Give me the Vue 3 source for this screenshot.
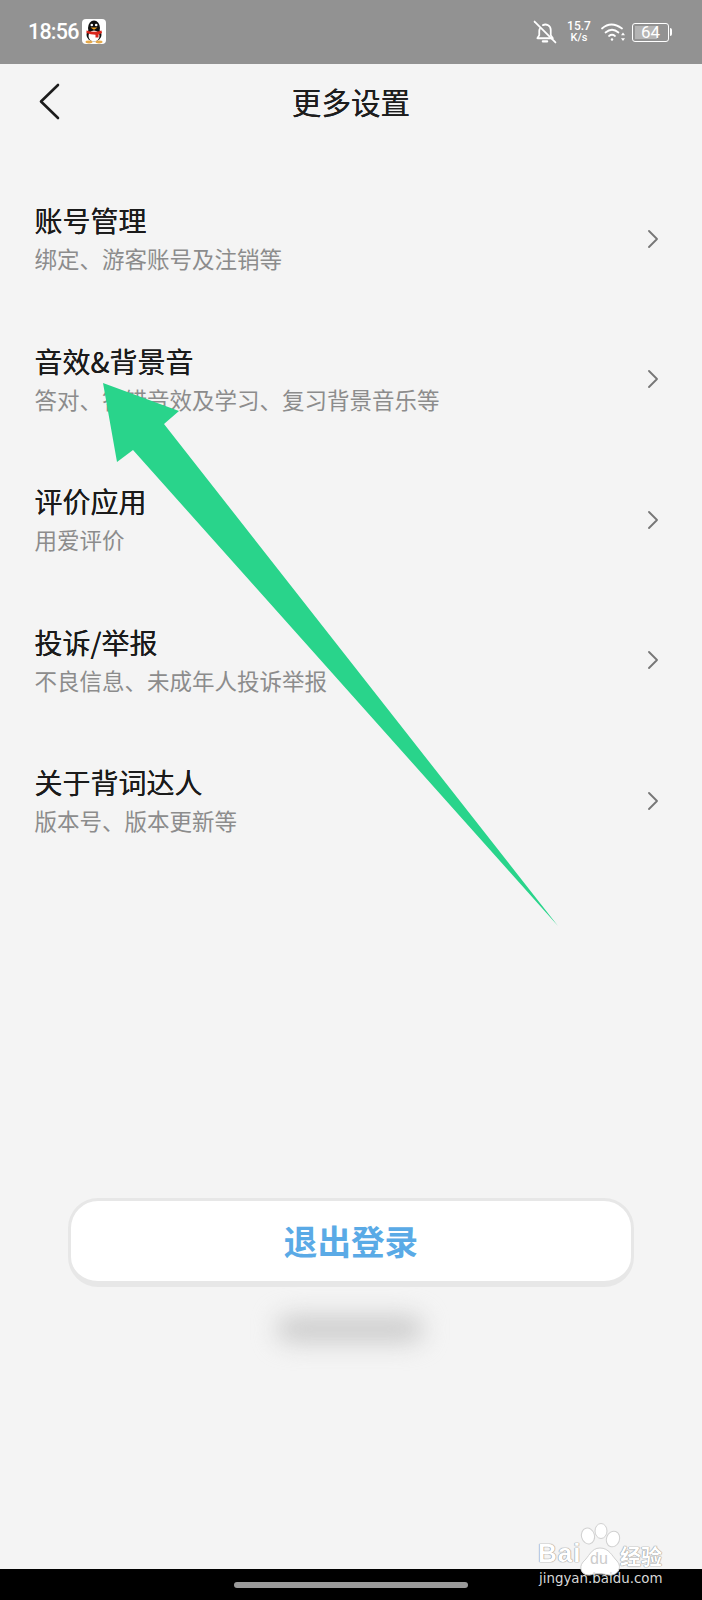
<script setup>
const rows = [
  { title: '账号管理', sub: '绑定、游客账号及注销等' },
  { title: '音效&背景音', sub: '答对、答错音效及学习、复习背景音乐等' },
  { title: '评价应用', sub: '用爱评价' },
  { title: '投诉/举报', sub: '不良信息、未成年人投诉举报' },
  { title: '关于背词达人', sub: '版本号、版本更新等' },
]
</script>

<template>
  <div class="page">
    <header class="status">
      <div class="status-left">
        <span class="time">18:56</span>
        <svg class="qq" width="24" height="25" viewBox="0 0 24 25">
          <rect width="24" height="25" rx="4" fill="#fff" />
          <ellipse cx="12" cy="9" rx="6" ry="7.500" fill="#111" />
          <ellipse cx="12" cy="16" rx="7.500" ry="6.500" fill="#111" />
          <ellipse cx="12" cy="17" rx="5.500" ry="5.500" fill="#fff" />
          <circle cx="9.800" cy="6" r="1.300" fill="#fff" />
          <circle cx="14.200" cy="6" r="1.300" fill="#fff" />
          <path d="M8.500 8.500h7l-3.500 2.200z" fill="#f0a020" />
          <path d="M4.500 11.500q7.500 2.500 15 0l.5 2.500q-1.500 1-3.500 1.400v3h-3v-2.600q-5 0-9-1.800z" fill="#d9261c" />
          <ellipse cx="7" cy="23" rx="3.500" ry="1.400" fill="#e6a94a" />
          <ellipse cx="17" cy="23" rx="3.500" ry="1.400" fill="#e6a94a" />
        </svg>
      </div>
      <div class="status-right">
        <svg width="24" height="24" viewBox="0 0 23 23" fill="none" stroke="#fff" stroke-width="1.700" stroke-linecap="round" stroke-linejoin="round">
          <path d="M5 17.500h14l-2-3V9.500a5.200 5.200 0 0 0-7.500-4.600" />
          <path d="M6.600 8.400q-.6 1-.6 2.100v4l-1.800 3" />
          <path d="M9.500 20.500h4" stroke-width="2.200" />
          <path d="M1.500 1.500l20 20" />
        </svg>
        <div class="speed"><span>15.7</span><span class="unit">K/s</span></div>
        <svg class="wifi" width="25" height="20" viewBox="0 0 25 20" fill="none" stroke="#fff" stroke-width="1.700" stroke-linecap="round">
          <path d="M1 6.500q9-8 20 0" />
          <path d="M4.500 10.500q6.500-5.500 13 0" />
          <path d="M8 14q3-2.500 6 0" />
          <circle cx="11" cy="17.500" r="1.200" fill="#fff" stroke="none" />
          <path d="M22 10.500l-2 2.800h4zM22 19l-2-2.800h4z" fill="#fff" stroke="none" />
        </svg>
        <div class="battery">
          <div class="battery-body">
            <span class="battery-fill"></span>
            <span class="battery-num">64</span>
          </div>
          <span class="battery-cap"></span>
        </div>
      </div>
    </header>

    <main class="main">
      <nav class="nav">
        <svg class="back" width="22" height="37" viewBox="0 0 22 37" fill="none" stroke="#1c1c1c" stroke-width="2.600" stroke-linecap="round" stroke-linejoin="round">
          <path d="M19 2L2 18.500 19 35" />
        </svg>
        <h1 class="nav-title">更多设置</h1>
      </nav>

      <ul class="list">
        <li v-for="row in rows" :key="row.title" class="row">
          <div class="row-text">
            <div class="row-title">{{ row.title }}</div>
            <div class="row-sub">{{ row.sub }}</div>
          </div>
          <svg class="chev" width="10" height="18" viewBox="0 0 10 18" fill="none" stroke="#767676" stroke-width="1.800" stroke-linecap="round" stroke-linejoin="round">
            <path d="M1 1l8 8-8 8" />
          </svg>
        </li>
      </ul>

      <button class="logout" type="button">退出登录</button>
      <div class="blurred"></div>
    </main>

    <footer class="navbar"><span class="pill"></span></footer>

    <svg class="arrow" width="702" height="1600" viewBox="0 0 702 1600">
      <polygon points="103,383 179,411 164,424 558,926 133,450 117,462" fill="#29d48b" />
    </svg>

    <div class="mark">
      <svg class="paw" width="66" height="58" viewBox="0 0 66 58" fill="#fff" stroke="#d0d0d0" stroke-width="1">
        <ellipse cx="21" cy="14" rx="6.500" ry="8" transform="rotate(-15 21 14)" />
        <ellipse cx="34" cy="9" rx="6" ry="7.500" />
        <ellipse cx="46" cy="17" rx="6.500" ry="8" transform="rotate(20 46 17)" />
        <path d="M33 26c9 0 12 8 17 13 6 7 0 15-8 14-5-1-13-2-19 0-8 1-12-7-7-13 6-5 8-14 17-14z" />
      </svg>
      <span class="mark-bai">Bai</span>
      <span class="mark-du">du</span>
      <span class="mark-jy">经验</span>
      <span class="mark-url">jingyan.baidu.com</span>
    </div>
  </div>
</template>

<style>
html, body { margin: 0; background: #f4f4f4; }
</style>

<style scoped>
.page {
  position: relative;
  width: 702px;
  height: 1600px;
  display: flex;
  flex-direction: column;
  overflow: hidden;
  background: #f4f4f4;
  font-family: "Noto Sans CJK SC", "Noto Sans", sans-serif;
}
.status {
  height: 64px;
  flex: none;
  background: #929292;
  display: flex;
  justify-content: space-between;
  align-items: center;
  padding: 0 30px 0 28px;
  box-sizing: border-box;
  color: #fff;
}
.status-left { display: flex; align-items: center; gap: 3px; margin-top: -1px; }
.time {
  font: 500 21.500px/1 Roboto, sans-serif;
  letter-spacing: -0.800px;
}
.status-right { display: flex; align-items: center; }
.speed {
  width: 24px;
  margin-left: 10px;
  display: flex;
  flex-direction: column;
  align-items: center;
  font: 500 12px/12px Roboto, sans-serif;
}
.speed .unit { font-size: 11px; }
.wifi { margin-left: 10px; }
.battery { display: flex; align-items: center; margin-left: 6px; }
.battery-body {
  position: relative;
  width: 37px;
  height: 19px;
  border: 1.500px solid #fff;
  border-radius: 3px;
  box-sizing: border-box;
  overflow: hidden;
  display: flex;
  align-items: center;
  justify-content: center;
}
.battery-fill {
  position: absolute;
  left: 2px;
  top: 2px;
  bottom: 2px;
  width: 62%;
  background: #b4b4b4;
}
.battery-num {
  position: relative;
  font: 400 17px/1 Roboto, sans-serif;
}
.battery-cap {
  width: 2px;
  height: 8px;
  margin-left: 1px;
  background: #fff;
  border-radius: 0 2px 2px 0;
}
.main { flex: 1; display: flex; flex-direction: column; }
.nav {
  position: relative;
  height: 75px;
  margin-bottom: 3px;
  flex: none;
  display: flex;
  align-items: center;
  justify-content: center;
}
.back { position: absolute; left: 39px; top: 19px; }
.nav-title {
  margin: 0;
  font-size: 29.600px;
  font-weight: 400;
  line-height: 1.200;
  color: #1d1d1d;
  text-shadow: 0 0 .4px #1d1d1d;
}
.list {
  list-style: none;
  margin: 29px 0 0;
  padding: 0 44px 0 34.500px;
}
.row {
  height: 140.500px;
  display: flex;
  align-items: center;
  justify-content: space-between;
  box-sizing: border-box;
}
.row-text { display: flex; flex-direction: column; gap: 4px; margin-top: -8px; }
.row-title {
  font-size: 28px;
  line-height: 38px;
  color: #1b1b1b;
  text-shadow: 0 0 .4px #1b1b1b;
}
.row-sub {
  font-size: 22.500px;
  line-height: 30px;
  color: #8c8c8c;
}
.chev { margin-top: -5px; }
.logout {
  display: block;
  width: 566px;
  height: 89px;
  margin: 324px 0 0 68px;
  padding: 0;
  box-sizing: border-box;
  background: #fff;
  border: 3px solid #e7e7e7;
  border-bottom-width: 6px;
  border-radius: 30px;
  color: #5aaae6;
  font-family: inherit;
  font-size: 33.600px;
  font-weight: 700;
}
.blurred {
  width: 146px;
  height: 26px;
  margin: 29px 0 0 277px;
  background: #cbcbcb;
  border-radius: 13px;
  filter: blur(12px);
}
.navbar {
  height: 31px;
  flex: none;
  background: #000;
  display: flex;
  justify-content: center;
  padding-top: 13px;
  box-sizing: border-box;
}
.pill {
  width: 234px;
  height: 6px;
  background: #9a9a9a;
  border-radius: 3px;
}
.arrow { position: absolute; left: 0; top: 0; pointer-events: none; }
.mark {
  position: absolute;
  left: 530px;
  top: 1520px;
  width: 140px;
  height: 70px;
  color: #fff;
}
.paw { position: absolute; left: 37px; top: 2px; }
.mark-bai {
  position: absolute;
  left: 8px;
  top: 18px;
  font: 700 26px/30px "Liberation Sans", sans-serif;
  letter-spacing: 1px;
  text-shadow: 0 0 1px #999, 0 0 1px #999, 0 0 1px #999;
}
.mark-du {
  position: absolute;
  left: 60px;
  top: 30px;
  font: 400 16px/18px "Liberation Sans", sans-serif;
  color: #ccc;
}
.mark-jy {
  position: absolute;
  left: 90px;
  top: 20px;
  font: 700 21px/30px "Noto Sans CJK SC", sans-serif;
  text-shadow: 0 0 1px #999, 0 0 1px #999, 0 0 1px #999;
}
.mark-url {
  position: absolute;
  left: 9px;
  top: 49px;
  font: 400 13.400px/20px "DejaVu Sans", sans-serif;
  color: #d8d8d8;
  white-space: nowrap;
}
</style>
